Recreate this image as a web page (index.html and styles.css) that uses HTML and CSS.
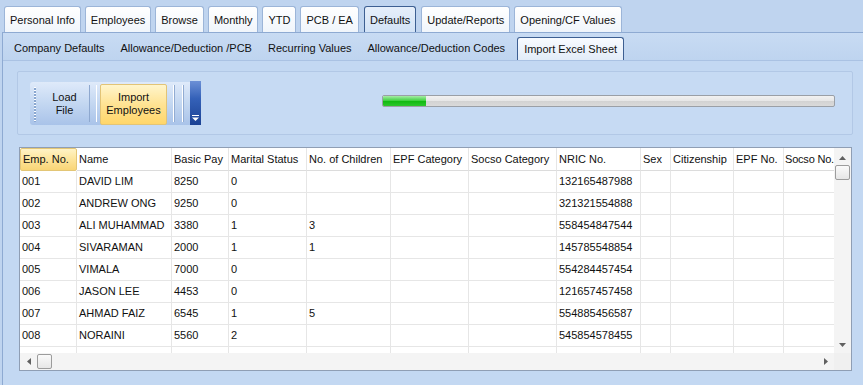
FILE: index.html
```html
<!DOCTYPE html>
<html lang="en">
<head>
    <meta charset="UTF-8">
    <title>Payroll - Import Excel Sheet</title>
    <link rel="stylesheet" href="styles.css">
</head>
<body>
    <nav class="tabs">
        <span class="tab">Personal Info</span>
        <span class="tab">Employees</span>
        <span class="tab">Browse</span>
        <span class="tab">Monthly</span>
        <span class="tab">YTD</span>
        <span class="tab">PCB / EA</span>
        <span class="tab active">Defaults</span>
        <span class="tab">Update/Reports</span>
        <span class="tab">Opening/CF Values</span>
    </nav>
    <section class="page">
        <nav class="subtabs">
            <span class="subtab">Company Defaults</span>
            <span class="subtab">Allowance/Deduction /PCB</span>
            <span class="subtab">Recurring Values</span>
            <span class="subtab">Allowance/Deduction Codes</span>
            <span class="subtab active">Import Excel Sheet</span>
        </nav>
        <div class="content">
            <div class="groupbox">
                <div class="toolbar">
                    <span class="grip"></span>
                    <button class="tbtn load">Load<br>File</button>
                    <span class="sep"></span>
                    <button class="tbtn hot">Import<br>Employees</button>
                    <span class="sep double"></span>
                    <span class="more">
                        <svg width="7" height="7" viewBox="0 0 7 7"><rect x="0" y="0" width="7" height="1" fill="#fff"/><path d="M0 2.5h7L3.5 6z" fill="#fff"/></svg>
                    </span>
                </div>
                <div class="progress"><div class="fill"></div></div>
            </div>

            <div class="grid">
                <div class="cells">
                    <table>
                        <colgroup>
                            <col class="w57"><col class="w95"><col class="w57"><col class="w78">
                            <col class="w84"><col class="w78"><col class="w88"><col class="w84">
                            <col class="w30"><col class="w63"><col class="w50"><col class="w51">
                        </colgroup>
                        <thead>
                            <tr>
                                <th class="sel">Emp. No.</th><th>Name</th><th>Basic Pay</th><th>Marital Status</th>
                                <th>No. of Children</th><th>EPF Category</th><th>Socso Category</th><th>NRIC No.</th>
                                <th>Sex</th><th>Citizenship</th><th>EPF No.</th><th class="last">Socso No.</th>
                            </tr>
                        </thead>
                        <tbody>
                            <tr><td>001</td><td>DAVID LIM</td><td>8250</td><td>0</td><td></td><td></td><td></td><td>132165487988</td><td></td><td></td><td></td><td></td></tr>
                            <tr><td>002</td><td>ANDREW ONG</td><td>9250</td><td>0</td><td></td><td></td><td></td><td>321321554888</td><td></td><td></td><td></td><td></td></tr>
                            <tr><td>003</td><td>ALI MUHAMMAD</td><td>3380</td><td>1</td><td>3</td><td></td><td></td><td>558454847544</td><td></td><td></td><td></td><td></td></tr>
                            <tr><td>004</td><td>SIVARAMAN</td><td>2000</td><td>1</td><td>1</td><td></td><td></td><td>145785548854</td><td></td><td></td><td></td><td></td></tr>
                            <tr><td>005</td><td>VIMALA</td><td>7000</td><td>0</td><td></td><td></td><td></td><td>554284457454</td><td></td><td></td><td></td><td></td></tr>
                            <tr><td>006</td><td>JASON LEE</td><td>4453</td><td>0</td><td></td><td></td><td></td><td>121657457458</td><td></td><td></td><td></td><td></td></tr>
                            <tr><td>007</td><td>AHMAD FAIZ</td><td>6545</td><td>1</td><td>5</td><td></td><td></td><td>554885456587</td><td></td><td></td><td></td><td></td></tr>
                            <tr><td>008</td><td>NORAINI</td><td>5560</td><td>2</td><td></td><td></td><td></td><td>545854578455</td><td></td><td></td><td></td><td></td></tr>
                            <tr><td>009</td><td>SELVA KRISHNAN</td><td>3700</td><td>2</td><td></td><td></td><td></td><td>585234457871</td><td></td><td></td><td></td><td></td></tr>
                        </tbody>
                    </table>
                </div>
                <div class="vscroll">
                    <span class="arrow"><svg width="7" height="4" viewBox="0 0 7 4"><path d="M0 4L3.5 0L7 4z" fill="#606060"/></svg></span>
                    <span class="thumb"></span>
                    <span class="track"></span>
                    <span class="arrow"><svg width="7" height="4" viewBox="0 0 7 4"><path d="M0 0L3.5 4L7 0z" fill="#606060"/></svg></span>
                </div>
                <div class="hscroll">
                    <span class="arrow"><svg width="4" height="7" viewBox="0 0 4 7"><path d="M4 0L0 3.5L4 7z" fill="#606060"/></svg></span>
                    <span class="thumb"></span>
                    <span class="track"></span>
                    <span class="arrow"><svg width="4" height="7" viewBox="0 0 4 7"><path d="M0 0L4 3.5L0 7z" fill="#606060"/></svg></span>
                </div>
                <div class="corner"></div>
            </div>
        </div>
    </section>
</body>
</html>
```

FILE: styles.css
```css
* {
    box-sizing: border-box;
}
body {
    margin: 0;
    width: 863px;
    height: 385px;
    overflow: hidden;
    background-color: #bfd4ef;
    font: 11px "Liberation Sans", Arial, sans-serif;
    color: #111;
}

/* main tabs */
.tabs {
    display: flex;
    gap: 4px;
    height: 32px;
    padding: 6px 0 0 4px;
}
.tab {
    height: 26px;
    line-height: 27px;
    padding: 0 5px;
    border: 1px solid #9cb5d8;
    border-bottom: none;
    border-radius: 3px 3px 0 0;
    background: linear-gradient(#ffffff, #f0f5fb);
    white-space: nowrap;
}
.tab.active {
    margin: 0 1px;
    border-color: #3d5f92;
    background: linear-gradient(#e6effa, #d2e2f6);
}

/* tab page */
.page {
    height: 353px;
    margin-left: 2px;
    border-left: 1px solid #8eaad2;
    border-top: 1px solid #8eaad2;
    display: flex;
    flex-direction: column;
}
.subtabs {
    display: flex;
    align-items: flex-end;
    height: 28px;
    padding-left: 3px;
    background: linear-gradient(#c8dbf3, #bed4ef);
    border-bottom: 1px solid #aac2e3;
}
.subtab {
    height: 23px;
    line-height: 23px;
    padding: 0 8px;
    white-space: nowrap;
}
.subtab.active {
    margin-left: 4px;
    padding: 0 6px;
    border: 1px solid #3d5f92;
    border-bottom: none;
    border-radius: 3px 3px 0 0;
    background: linear-gradient(#f8fbff, #e2ecf8);
}
.content {
    flex: 1;
    padding: 10px 10px 0 14px;
    background-color: #c3d8f2;
}

/* tool group */
.groupbox {
    height: 64px;
    border: 1px solid #b2c8e6;
    border-radius: 2px;
    background-color: #c6daf3;
    display: flex;
    align-items: center;
    padding: 0 17px 0 12px;
}
.toolbar {
    display: flex;
    width: 171px;
    height: 43px;
    padding-top: 1px;
    border-radius: 3px 0 0 3px;
    background: linear-gradient(#dfeafa, #c6d9f2 45%, #a9c3e9);
}
.grip {
    width: 2px;
    margin: 4px 4px 3px 4px;
    background: repeating-linear-gradient(#ffffff 0 1px, #8aa7d0 1px 3px);
}
.tbtn {
    border: none;
    background: none;
    font: inherit;
    color: #111;
    line-height: 13px;
    padding: 0;
    text-align: center;
}
.tbtn.load {
    width: 49px;
}
.tbtn.hot {
    width: 67px;
    margin-top: 1px;
    border: 1px solid #e2c477;
    border-radius: 2px;
    background: linear-gradient(#fff5cc, #ffe393 50%, #ffd66a);
}
.sep {
    width: 11px;
    margin: 2px 0 3px;
    background: linear-gradient(to right, #8ea8cf 0 1px, transparent 1px 7px, #ffffff 7px 8px, transparent 8px);
}
.sep.double {
    width: 23px;
    background: linear-gradient(to right, transparent 0 6px, #ffffff 6px 7px, #92acd2 7px 8px, transparent 8px 15px, #ffffff 15px 16px, #92acd2 16px 17px, transparent 17px);
}
.more {
    width: 11px;
    margin-top: -2px;
    display: flex;
    align-items: flex-end;
    justify-content: center;
    padding-bottom: 3px;
    background: linear-gradient(#6c90d6, #3461b8 40%, #1c4294);
}
.progress {
    margin-left: auto;
    margin-bottom: 5px;
    width: 453px;
    height: 12px;
    border: 1px solid #9a9fa6;
    border-radius: 2px;
    background: linear-gradient(#f2f2f2, #e6e6e6 50%, #d2d2d2 51%, #dadada);
    overflow: hidden;
}
.fill {
    width: 43px;
    height: 100%;
    background: linear-gradient(#a6eca6, #44d244 45%, #12bb12 55%, #2cc62c);
}

/* data grid */
.grid {
    margin: 12px 1px 0 2px;
    height: 224px;
    border: 1px solid #8f9eb4;
    background-color: #fff;
    display: grid;
    grid-template-columns: 1fr 17px;
    grid-template-rows: 1fr 17px;
}
.cells {
    overflow: hidden;
}
table {
    table-layout: fixed;
    width: 815px;
    border-collapse: separate;
    border-spacing: 0;
}
.w57 { width: 57px; }
.w95 { width: 95px; }
.w78 { width: 78px; }
.w84 { width: 84px; }
.w88 { width: 88px; }
.w30 { width: 30px; }
.w63 { width: 63px; }
.w50 { width: 50px; }
.w51 { width: 51px; }
th, td {
    height: 22px;
    padding: 0 0 0 2px;
    line-height: 21px;
    text-align: left;
    font-weight: normal;
    white-space: nowrap;
    overflow: hidden;
    border-right: 1px solid #e6e6e6;
    border-bottom: 1px solid #e6e6e6;
}
th {
    border-bottom-color: #dcdcdc;
}
th.last {
    padding-left: 1px;
    letter-spacing: -0.2px;
}
th.sel {
    border: 1px solid #e3c676;
    border-radius: 2px;
    background: linear-gradient(#fff3c6, #fde49a 50%, #f9d576);
}
.vscroll, .hscroll {
    display: flex;
    background-color: #f4f4f4;
}
.vscroll {
    flex-direction: column;
    align-items: center;
}
.hscroll {
    align-items: center;
}
.arrow {
    width: 17px;
    height: 17px;
    display: flex;
    align-items: center;
    justify-content: center;
}
.vscroll .arrow:first-child {
    padding-top: 3px;
}
.thumb {
    width: 15px;
    height: 15px;
    border: 1px solid #9c9c9c;
    border-radius: 2px;
    background: linear-gradient(#fafafa, #e6e6e6);
}
.track {
    flex: 1;
}
.corner {
    background-color: #f0f0f0;
}
```
